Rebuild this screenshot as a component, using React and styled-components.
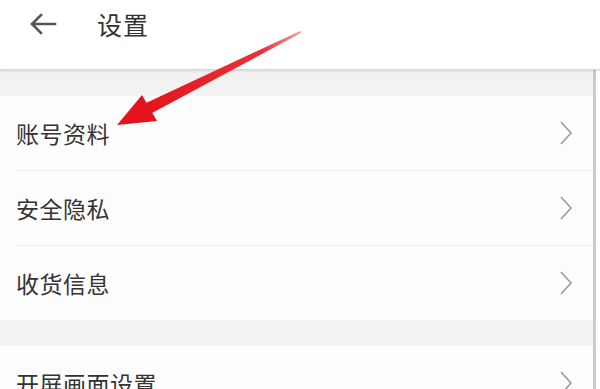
import React from 'react'
import styled, { createGlobalStyle } from 'styled-components'

const GlobalStyle = createGlobalStyle`
    html, body {
        margin: 0;
        padding: 0;
        background: #ffffff;
        overflow: hidden;
    }
    body {
        font-family: "Noto Sans CJK SC", "Noto Sans", sans-serif;
    }
`

const Page = styled.div`
    position: relative;
    width: 600px;
    height: 389px;
    overflow: hidden;
    background: #ffffff;
`

const Header = styled.div`
    display: flex;
    align-items: center;
    height: 70px;
    padding-bottom: 22px;
    box-sizing: border-box;
    background: #ffffff;
    border-bottom: 1px solid #d6d6d6;
    box-shadow: 0 1px 3px rgba(0, 0, 0, 0.12);
    position: relative;
    z-index: 1;

    .back{
        width: 30px;
        height: 30px;
        margin-left: 28px;
        margin-right: 39px;
    }
    .title{
        font-size: 25px;
        color: #333333;
        letter-spacing: 1px;
    }
`

const Content = styled.div`
    width: 593px;
    border-right: 3px solid #cbcbcb;
    background: #f2f2f2;
`

const Gap = styled.div`
    height: ${props => props.h}px;
    background: #f2f2f2;
`

const Group = styled.div`
    background: #fdfdfd;
`

const Row = styled.div`
    display: flex;
    align-items: center;
    justify-content: space-between;
    height: 74px;
    margin-left: 16px;
    padding-right: 20px;
    border-bottom: ${props => props.last ? 'none' : '1px solid #efefef'};

    span{
        font-size: 23px;
        color: #333333;
        letter-spacing: 0.5px;
    }
    svg{
        width: 14px;
        height: 26px;
    }
`

const Arrow = styled.svg`
    position: absolute;
    left: 0;
    top: 0;
    width: 600px;
    height: 389px;
    pointer-events: none;
    z-index: 2;
`

function Chevron() {
    return (
        <svg viewBox="0 0 14 26" fill="none">
            <path d="M2 2 L12 13 L2 24" stroke="#9a9a9a" strokeWidth="1.6" strokeLinejoin="miter"/>
        </svg>
    )
}

const groups = [
    ['账号资料', '安全隐私', '收货信息'],
    ['开屏画面设置', '通用设置']
]

export default function App() {
    return (
        <Page>
            <GlobalStyle/>
            <Header>
                <svg className='back' viewBox="0 0 30 30" fill="none">
                    <path d="M27 15 H4 M13 6 L4 15 L13 24" stroke="#555555" strokeWidth="2.6" strokeLinecap="square"/>
                </svg>
                <span className='title'>设置</span>
            </Header>
            <Content>
                <Gap h={26}/>
                <Group>
                    {groups[0].map((t, i) => (
                        <Row key={t} last={i === groups[0].length - 1}>
                            <span>{t}</span>
                            <Chevron/>
                        </Row>
                    ))}
                </Group>
                <Gap h={26}/>
                <Group>
                    {groups[1].map((t, i) => (
                        <Row key={t} last={i === groups[1].length - 1}>
                            <span>{t}</span>
                            <Chevron/>
                        </Row>
                    ))}
                </Group>
            </Content>
            <Arrow viewBox="0 0 600 389">
                <defs>
                    <linearGradient id="shaft" x1="300" y1="32" x2="150" y2="108" gradientUnits="userSpaceOnUse">
                        <stop offset="0" stopColor="#f0a0a8"/>
                        <stop offset="0.25" stopColor="#e8323a"/>
                        <stop offset="1" stopColor="#e5141c"/>
                    </linearGradient>
                </defs>
                <polygon points="300,31 301,33 152,113 146,103" fill="url(#shaft)"/>
                <polygon points="117,125 142,95 157,121" fill="#e5141c"/>
            </Arrow>
        </Page>
    )
}
